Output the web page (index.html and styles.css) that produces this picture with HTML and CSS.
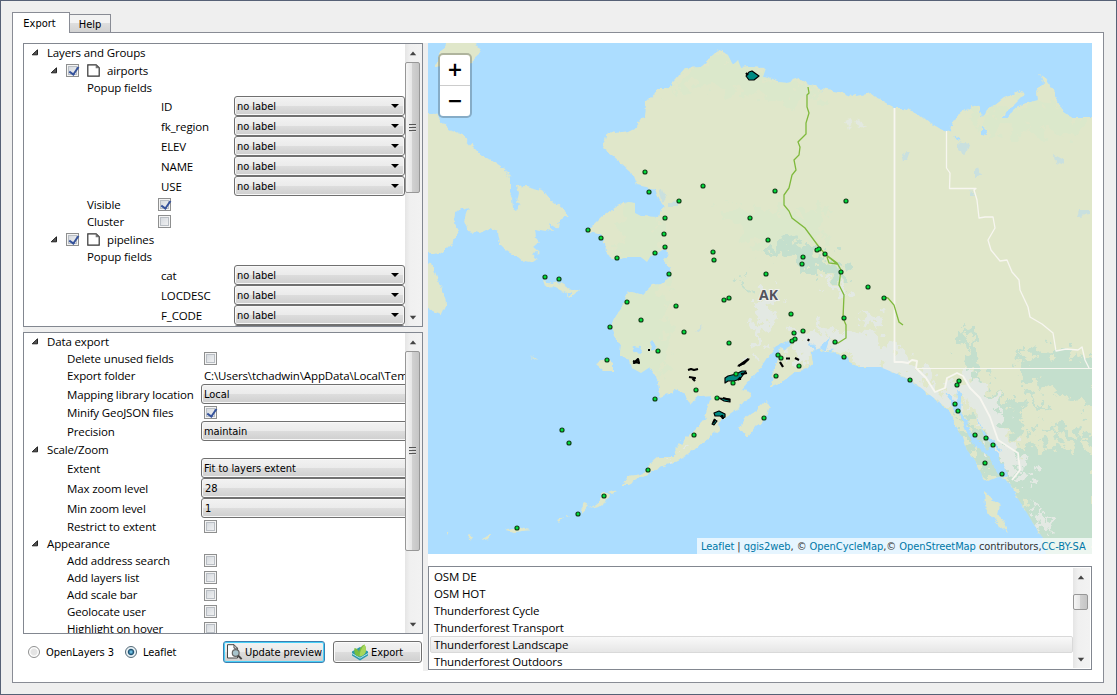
FILE: index.html
```html
<!DOCTYPE html>
<html lang="en">
<head>
<meta charset="utf-8">
<title>qgis2web</title>
<link rel="stylesheet" href="styles.css">
</head>
<body>
<div class="window">
  <svg class="defs" width="0" height="0">
    <symbol id="open" viewBox="0 0 8 7"><path d="M6.500 .8V5.800H1.200z" fill="#555" stroke="#222" stroke-width="1" stroke-linejoin="round"/></symbol>
    <symbol id="page" viewBox="0 0 13 13"><path d="M.8.8h8.4l3 3v8.4H.8z" fill="#fff" stroke="#333" stroke-width="1.2"/><path d="M8.7.8v3.5h3.5z" fill="#777"/></symbol>
    <symbol id="up" viewBox="0 0 8 5"><path d="M4 .6 7.200 4.300H.8z" fill="#444"/></symbol>
    <symbol id="down" viewBox="0 0 8 5"><path d="M.8.7h6.400L4 4.400z" fill="#444"/></symbol>
  </svg>
  <nav class="tabs"><span class="tab active">Export</span><span class="tab">Help</span></nav>
  <main class="panel">
    <section class="left">
      <div class="tree tree-layers">
        <div class="rows">
          <div class="row"><svg class="arrow"><use href="#open"/></svg><span>Layers and Groups</span></div>
          <div class="row layer"><svg class="arrow"><use href="#open"/></svg><i class="check on"></i><svg class="page"><use href="#page"/></svg><span>airports</span></div>
          <div class="row popup">Popup fields</div>
          <div class="row field"><span class="name">ID</span><span class="combo">no label</span></div>
          <div class="row field"><span class="name">fk_region</span><span class="combo">no label</span></div>
          <div class="row field"><span class="name">ELEV</span><span class="combo">no label</span></div>
          <div class="row field"><span class="name">NAME</span><span class="combo">no label</span></div>
          <div class="row field"><span class="name">USE</span><span class="combo">no label</span></div>
          <div class="row flag"><span class="name">Visible</span><i class="check on"></i></div>
          <div class="row flag"><span class="name">Cluster</span><i class="check"></i></div>
          <div class="row layer"><svg class="arrow"><use href="#open"/></svg><i class="check on"></i><svg class="page"><use href="#page"/></svg><span>pipelines</span></div>
          <div class="row popup">Popup fields</div>
          <div class="row field"><span class="name">cat</span><span class="combo">no label</span></div>
          <div class="row field"><span class="name">LOCDESC</span><span class="combo">no label</span></div>
          <div class="row field"><span class="name">F_CODE</span><span class="combo">no label</span></div>
          <div class="row field"><span class="name"></span><span class="combo"></span></div>
        </div>
        <div class="scroll"><svg class="sa"><use href="#up"/></svg><div class="thumb t1"><i class="grip"></i></div><svg class="sa end"><use href="#down"/></svg></div>
      </div>
      <div class="splitter-h"></div>
      <div class="tree tree-options">
        <div class="rows">
          <div class="row"><svg class="arrow"><use href="#open"/></svg><span>Data export</span></div>
          <div class="row opt"><span class="name">Delete unused fields</span><i class="check"></i></div>
          <div class="row opt"><span class="name">Export folder</span><span class="path">C:\Users\tchadwin\AppData\Local\Temp</span></div>
          <div class="row opt tall"><span class="name">Mapping library location</span><span class="combo wide">Local</span></div>
          <div class="row opt"><span class="name">Minify GeoJSON files</span><i class="check on"></i></div>
          <div class="row opt tall"><span class="name">Precision</span><span class="combo wide">maintain</span></div>
          <div class="row"><svg class="arrow"><use href="#open"/></svg><span>Scale/Zoom</span></div>
          <div class="row opt tall"><span class="name">Extent</span><span class="combo wide">Fit to layers extent</span></div>
          <div class="row opt tall"><span class="name">Max zoom level</span><span class="combo wide num">28</span></div>
          <div class="row opt tall"><span class="name">Min zoom level</span><span class="combo wide num">1</span></div>
          <div class="row opt"><span class="name">Restrict to extent</span><i class="check"></i></div>
          <div class="row"><svg class="arrow"><use href="#open"/></svg><span>Appearance</span></div>
          <div class="row opt"><span class="name">Add address search</span><i class="check"></i></div>
          <div class="row opt"><span class="name">Add layers list</span><i class="check"></i></div>
          <div class="row opt"><span class="name">Add scale bar</span><i class="check"></i></div>
          <div class="row opt"><span class="name">Geolocate user</span><i class="check"></i></div>
          <div class="row opt"><span class="name">Highlight on hover</span><i class="check"></i></div>
        </div>
        <div class="scroll"><svg class="sa"><use href="#up"/></svg><div class="thumb t2"><i class="grip"></i></div><svg class="sa end"><use href="#down"/></svg></div>
      </div>
      <div class="actions">
        <i class="radio"></i><span class="rl r1">OpenLayers 3</span>
        <i class="radio sel"></i><span class="rl r2">Leaflet</span>
        <button class="btn primary"><svg width="17" height="16" viewBox="0 0 17 16"><path d="M1.5.7H8l3.5 3.5V14h-10z" fill="#fff" stroke="#444"/><path d="M8 .7v3.5h3.5" fill="none" stroke="#444"/><circle cx="9.7" cy="9" r="3.4" fill="#a8c4cc" stroke="#666" stroke-width="1.2"/><path d="m12 11.5 3.7 3.6" stroke="#444" stroke-width="2"/></svg><span>Update preview</span></button>
        <button class="btn export"><svg width="16" height="17" viewBox="0 0 16 17"><path d="M0 7.500 8 3l8 4.500v4L8 16.500 0 11.500z" fill="#2a98ab"/><path d="m0 9.500 8 4.700 8-4.700" fill="none" stroke="#d5f4fa" stroke-width=".8"/><path d="M7.500 12.500C3.500 12.500 1.500 9 2.500 4 5 4.500 6.500 6 7 8 7.500 4 9.500 1.500 12.500 .5 15.500 6 14 11.500 7.500 12.500z" fill="#79bd40"/><path d="M7.500 12.500C7.500 8.500 9.500 4 12.500 .5 15.500 6 14 11.500 7.500 12.500z" fill="#a8d65c"/></svg><span>Export</span></button>
      </div>
    </section>
    <div class="splitter-v"></div>
    <section class="right">
      <div class="map">
        <svg width="664" height="511" viewBox="428 43 664 511">
          <defs>
            <filter id="coast" x="-5%" y="-5%" width="110%" height="110%"><feTurbulence type="fractalNoise" baseFrequency=".12" numOctaves="3" seed="4"/><feDisplacementMap in="SourceGraphic" scale="7" xChannelSelector="R" yChannelSelector="G"/></filter>
            <filter id="rough" x="-20%" y="-20%" width="140%" height="140%"><feTurbulence type="fractalNoise" baseFrequency=".09" numOctaves="5" seed="9"/><feDisplacementMap in="SourceGraphic" scale="42" xChannelSelector="R" yChannelSelector="G"/></filter>
            <path id="mainland" d="M608 132L603 148 611 154 620 162 631 172 636 185 645 187 655 189 658 197 661 203 665 206 660 210 658 217 641 216 635 213 635 203 628 202 618 206 603 215 595 223 587 231 600 235 605 243 606 253 616 260 628 257 641 257 647 262 650 257 658 253 665 248 669 252 667 258 663 259 669 267 670 277 661 284 653 285 643 295 631 292 626 295 625 303 618 313 612 323 615 337 621 345 620 355 630 360 632 368 641 373 650 367 655 373 658 383 660 396 675 390 685 394 691 404 695 398 711 396 708 405 705 418 698 427 688 437 675 450 674 457 658 457 651 463 641 475 628 477 623 485 628 485 640 478 650 473 661 467 673 463 683 458 695 448 711 437 720 430 718 423 731 413 743 405 753 393 741 390 750 380 761 368 768 357 776 347 788 340 793 343 780 350 773 373 769 388 777 385 787 378 798 370 807 368 812 362 810 352 820 348 827 353 837 352 847 357 850 362 858 367 880 367 897 374 910 379 920 387 930 395 943 405 952 413 955 427 963 438 967 450 975 460 983 477 988 481 997 477 1010 483 1017 497 1027 513 1033 523 1043 538 1047 560H1100V118H1072L1063 112 1057 100 1052 88 1045 78 1040 75 1043 83 1037 93 1038 100 1027 103 1015 108 1008 118 1000 118 1013 105 1025 93 1019 91 1003 98 987 110 983 117 978 107 973 105 963 112 952 120 950 130 945 132 930 123 917 112 903 108 894 108 880 100 870 93 853 97 840 92 820 89 807 83 800 79 787 83 776 82 768 78 763 77 766 68 748 67 741 68 738 60 733 65 728 55 716 50 711 58 701 67 685 68 675 80 668 87 658 87 651 97 645 103 644 117 636 127 628 131 615 133z"/>
            <clipPath id="land"><use href="#mainland"/></clipPath>
          </defs>
          <rect x="428" y="43" width="664" height="511" fill="#acddff"/>
          <g fill="#e0e7ca" filter="url(#coast)">
            <use href="#mainland"/>
            <path d="M420 113H430L436 114 446 127 461 134 478 152 493 161 505 169 510 178 510 192 513 197 514 208 517 210 521 204 516 202 518 193 516 187 525 186 545 191 553 202 561 208 569 215 560 220 557 228 548 222 553 231 535 228 536 237 540 242 534 247 540 252 531 253 537 260 531 264 525 263 518 257 508 252 500 244 498 232 490 228 480 233 468 231 464 220 468 208 455 213 454 222 459 231 453 243 445 251 435 254H420zM420 263L432 264 437 277 443 293 446 303 441 314 420 305z"/>
            <path d="M436 68L438 56 450 40H474L480 54 472 61 460 64zM543 281L545 287 553 286 565 293 571 298 579 291 568 287 560 282 552 284zM595 364L607 359 614 364 614 371 603 371zM560 290L566 293 572 292 569 298zM740 427L745 418 756 410 766 400 769 405 766 416 757 426 748 437zM603 493L609 495 605 504 590 508 599 502zM580 511L585 503 590 505 582 514zM505 530L517 527 530 530 516 532zM490 535L478 540 490 538zM473 536l-5-1 3 4zM557 520l6-3-4 5zM608 492l5-2 4 2-4 2zM570 514l-6 3 4-1zM445 533l4-2-3 5zM984 492L993 500 1000 505 998 514 1004 524 1008 533 998 525 990 515 985 504zM530 356l6 4 2 1-4-1z"/>
          </g>
          <g clip-path="url(#land)">
            <g fill="#dbe8cb" filter="url(#rough)"><path d="M665 90L700 60 730 50 770 72 830 95 780 105 740 93 700 85zM970 110L1080 100V135L980 130zM630 190L660 220 670 370 640 390 600 340zM720 210H830L820 240 760 250z"/></g>
            <g fill="#c4dfcd" filter="url(#rough)"><path d="M770 246L790 240 817 252 826 263 840 262 851 278 846 286 825 269 800 269 785 255 768 260zM1015 358L1055 350 1100 360V410L1070 400 1050 385 1025 378zM1035 440L1060 450 1080 440 1100 450V570H1045L1025 520 1010 490 1000 470zM963 320L972 330 975 350 985 375 975 385 966 360zM990 385L1010 410 1030 430 1020 440 1000 420zM960 412L976 430 1005 450 1006 475 985 475 970 447zM1040 425L1092 431 1080 445zM740 275l9 13-5 6zM1000 400l15 0 10 15-13-3zM1020 390l12 3 20 18-14-5z"/></g>
            <g fill="#e3e9e3" filter="url(#rough)"><path d="M760 294L780 293 769 318 763 343 753 360 750 355 757 329zM790 335L812 329 838 332 860 330 887 340 905 350 915 365 930 378 945 395 965 370 990 392 1008 431 1022 460 1012 478 993 448 979 423 965 398 945 413 915 389 882 374 857 365 838 349 812 358 796 367zM856 316l16-4 9 9-9 7zM820 279l16 2 10 11-7 5zM1030 500l14 15 10 23-17-18zM675 450l10-4 7 4-13 3zM1023 460l9 9-5 17-12 1z"/></g>
            <g fill="#e3e9e0" filter="url(#coast)"><path d="M846 121l5-2 3 4-5 4zM856 119l3-1 4 5 4 5-5-2-4 2zM848 127l4 1-3 3z"/></g>
            <g fill="#c9e0df" filter="url(#coast)"><path d="M659 190l4-1 3 10-5 3zM669 201l13 1-4 4-9 0zM958 142l11 2-2 6-2 5-7-5zM901 152l4 1 5-2-3 8-4 3zM975 170l4-2 2 6-6 4zM1055 155l9 5 1 6-9-3zM1079 211l10 0 1 4-13 1zM694 331l9-7-4 8zM972 190l3 7-4 0z"/></g>
            <g fill="#acddff" filter="url(#coast)"><path d="M635 346l7 1-2 6-8-1zM652 341l5 5-5 5-3-5zM812 343l8 12-6-3-5-11zM820 347l10-9-5 16zM834 347l-10 20-4 5 5-15zM957 389l5 7-2 13 10 22 20 21-2 3-17-13-10-25-8-8 5-11zM946 393l7 4 2 14-5-11zM976 414l8 17 17 18-2 3-15-16zM991 445l18 32-4 3-9-8-9-20zM982 126l4 2-1 8-3-1zM953 136l8 5-5-1z"/></g>
          </g>
          <g fill="none" stroke="#f7f6f0" stroke-linejoin="round">
            <path stroke-width="1.800" d="M894.500 108V362L902 362 908 363 912 360 917 361 916 368 926 378 935 392 945 388 947 378 957 373 963 376 970 388 980 398 990 417 998 440 1018 453 1020 470 1012 480"/>
            <path stroke-width="1.300" d="M946.500 131V168L950 173 949.500 188.500H976L974 190 977 200 979 218 985 217 993 217 995 228 988 240 991 250 1000 261 1007 260 1012 272 1019 280 1020 290 1028 307 1030 317 1042 324 1053 333 1056 351 1066 349 1078 350 1082 347 1085 360 1089 368"/>
            <path d="M917 368.500H1092"/>
          </g>
          <g fill="none" stroke="#7fb93c" stroke-width="1.300"><path d="M808 87L809 93 807 95 807 107 809 113 806 123 806 134 798 142 800 147 799 155 794 160 796 170 792 175 789 188 784 195 784 205 789 211 792 218 805 228 819 247 825 254 837 263 841 270 839 285 844 295 843 318 846 325 846 338 838 343 834 342M827 257L829 263 837 264 831 259 826 255M884 297L888 298 894 305 899 322 903 325"/></g>
          <g fill="#008b83" stroke="#000" stroke-width="1.200" stroke-linejoin="round">
            <path d="M746 76l3-4 3-1 7 5-5 4-5 0zM725 378l3-2 8-2 6-3 4 0-6 8-6 2-6 0-3 2zM714 413l5-2 6 3 0 3-2 1-3-2-5 0zM712 424l3-4 2 1-3 4zM719 398l11 1 0 3-6-1zM738 366l6-4 5-3-5 5z"/>
            <path fill="none" stroke-width="2.200" d="M746 73l2 2M741 374l6-1M738 380l2-2v2M738.500 366l3-2 7-5M688 370l3-1 3 1 4-1M689 377l6 1-2 1 2 2M633 361l6 2-1-4-4 4 3-1M648 350h2M723 398l7 2M722 415l1 4M713 423l2-4M780 362l3 5M786 358.500h4M795 358l4 2M808 341l1-2M793 341l3-2"/>
          </g>
          <text x="759" y="299.500" class="ak">AK</text>
          <defs><path id="sites" stroke-linecap="round" d="M645 172h.01M649 192h.01M703 186h.01M679 201h.01M775 191h.01M846 201h.01M665 218h.01M664 234h.01M665 247h.01M655 253h.01M588 230h.01M601 238h.01M617 258h.01M545 277h.01M559 279h.01M750 218h.01M768 240h.01M713 252h.01M714 260h.01M669 274h.01M766 274h.01M724 300h.01M729 298h.01M817 250h.01M819 249h.01M825 254h.01M803 257h.01M802 264h.01M841 272h.01M868 287h.01M884 298h.01M627 302h.01M641 320h.01M610 327h.01M676 306h.01M684 332h.01M729 343h.01M658 351h.01M607 360h.01M655 399h.01M696 390h.01M736 374h.01M733 383h.01M717 398h.01M764 418h.01M694 435h.01M562 430h.01M569 443h.01M648 470h.01M604 496h.01M578 514h.01M517 528h.01M791 314h.01M803 331h.01M794 333h.01M792 341h.01M795 339h.01M844 318h.01M835 342h.01M844 357h.01M778 355h.01M781 358h.01M799 366h.01M776 376h.01M910 380h.01M959 381h.01M957 385h.01M955 404h.01M958 411h.01M975 435h.01M986 438h.01M993 445h.01M985 463h.01M1002 474h.01"/></defs>
          <use href="#sites" stroke="#123d18" stroke-width="5.200"/><use href="#sites" stroke="#00dd3b" stroke-width="2.900"/>
        </svg>
        <div class="zoom"><span>+</span><span>−</span></div>
        <div class="attribution"><a>Leaflet</a> | <a>qgis2web</a>, © <a>OpenCycleMap</a>,© <a>OpenStreetMap</a> contributors,<a>CC-BY-SA</a></div>
      </div>
      <div class="basemaps">
        <ul><li>OSM DE</li><li>OSM HOT</li><li>Thunderforest Cycle</li><li>Thunderforest Transport</li><li class="current">Thunderforest Landscape</li><li>Thunderforest Outdoors</li></ul>
        <div class="scroll"><svg class="sa"><use href="#up"/></svg><div class="thumb t3"></div><svg class="sa end"><use href="#down"/></svg></div>
      </div>
    </section>
  </main>
</div>
</body>
</html>
```
FILE: styles.css
```css
* { box-sizing: border-box; }
body { margin: 0; font: 11.5px/17px "Open Sans", "Noto Sans", sans-serif; color: #000; }
.window { width: 1117px; height: 695px; border: 1px solid #566176; background: #efefef; padding: 11px 13px 0 11px; overflow: hidden; }
.defs { position: absolute; }
.tabs { height: 20px; display: flex; align-items: flex-end; font: 11px/18px "DejaVu Sans Condensed", sans-serif; }
.tab { height: 18px; width: 41px; border: 1px solid #898c95; border-left: 0; border-bottom: 0; background: linear-gradient(#f3f3f3 50%, #dedede 50%, #d2d2d2); text-align: center; line-height: 19px; }
.tab.active { position: relative; z-index: 1; width: 58px; height: 21px; margin-bottom: -1px; border-left: 1px solid #898c95; background: #fff; line-height: 21px; padding-right: 3px; }
.panel { height: 651px; width: 1092px; border: 1px solid #898c95; background: #fff; padding: 10px; display: flex; }
.left { width: 400px; flex: none; }
.tree { border: 1px solid #828790; display: flex; background: #fff; overflow: hidden; }
.tree-layers { height: 284px; }
.tree-options { height: 302px; }
.rows { width: 381px; overflow: hidden; flex: none; }
.splitter-h { height: 5px; background: #efefef; }
.splitter-v { width: 5px; height: 628px; background: #efefef; flex: none; }
.row { height: 17px; display: flex; align-items: center; white-space: nowrap; padding-left: 8px; letter-spacing: -.14px; }
.arrow { width: 8px; height: 7px; margin: 0 8px 0 -1px; flex: none; }
.layer { height: 19px; padding-left: 27px; }
.layer .check { margin-left: 0; }
.page { width: 13px; height: 13px; margin: 0 7px 0 8px; }
.popup { height: 16px; padding-left: 63px; line-height: 16px; }
.field { height: 20px; padding-left: 137px; }
.field .name { width: 73px; padding-top: 1px; }
.combo { width: 171px; height: 20px; flex: none; border: 1px solid #707070; border-radius: 3px; box-shadow: inset 0 0 0 1px #f8f8f8; background: linear-gradient(#f2f2f2, #ebebeb 50%, #dddddd 50%, #cfcfcf); padding-left: 2px; font: 11px/19px "DejaVu Sans Condensed", sans-serif; letter-spacing: -.05px; display: flex; justify-content: space-between; }
.combo::after { content: ""; border: 4px solid transparent; border-top: 4.500px solid #000; border-bottom: 0; margin: 7px 5px 0 0; height: 0; }
.flag { padding-left: 63px; }
.flag .name { width: 71px; }
.opt { padding-left: 43px; }
.opt .name { width: 137px; flex: none; }
.opt .combo { margin-left: -3px; }
.combo.wide { width: 230px; }
.combo.num { padding-left: 3px; }
.tall { height: 20px; }
.check { width: 13px; height: 13px; flex: none; border: 1px solid #8e8f8f; box-shadow: inset 0 0 0 1px #f4f4f4, inset 0 0 0 2px #b9bec4; background: linear-gradient(135deg, #cfd4da, #f6f6f6); }
.check.on::after { content: ""; display: block; width: 4px; height: 8px; margin: 0 0 0 4px; border: solid #35529b; border-width: 0 2px 2px 0; transform: rotate(35deg); }
.scroll { width: 17px; flex: none; display: flex; flex-direction: column; align-items: center; background: linear-gradient(90deg, #e5e5e5, #f0f0f0 30%, #f2f2f2); padding: 7px 2px 6px 0; }
.sa { width: 8px; height: 5px; flex: none; }
.end { margin-top: auto; }
.thumb { width: 15px; border: 1px solid #979797; border-radius: 2px; background: linear-gradient(90deg, #f5f5f5, #e6e6e6 45%, #d0d0d0 50%, #c5c5c5); margin-top: 6px; display: flex; align-items: center; justify-content: center; flex: none; }
.t1 { height: 131px; }
.t2 { height: 200px; }
.t3 { height: 16px; margin-top: 14px; }
.grip { width: 7px; height: 8px; background: repeating-linear-gradient(#555 0 1px, #ddd 1px 2px, transparent 2px 3px); }
.actions { display: flex; align-items: center; height: 37px; padding: 0 0 1px 5px; font: 11px/17px "DejaVu Sans Condensed", sans-serif; }
.radio { width: 12px; height: 12px; border-radius: 50%; border: 1px solid #8e8f8f; background: radial-gradient(#e4e4e4 40%, #fff 60%); flex: none; }
.radio.sel { background: radial-gradient(circle, #72c4e8 0 8%, #174b6c 38%, #e8f1f5 52%); border-color: #536977; }
.rl { padding-left: 6px; white-space: nowrap; letter-spacing: -.05px; }
.r1 { width: 85px; }
.r2 { width: 58px; }
.btn { height: 22px; display: flex; align-items: center; justify-content: center; gap: 3px; padding: 0; border: 1px solid #707070; border-radius: 3px; box-shadow: inset 0 0 0 1px #fbfbfb; background: linear-gradient(#f2f2f2, #ebebeb 50%, #dddddd 50%, #cfcfcf); font: inherit; letter-spacing: -.08px; white-space: nowrap; color: #000; }
.primary { width: 102px; margin-left: 28px; border-color: #3c7fb1; box-shadow: inset 0 0 0 1px #48d0f8; gap: 2px; }
.export { width: 89px; margin-left: 8px; }
.right { width: 664px; }
.map { position: relative; height: 511px; }
.map svg { display: block; }
.ak { font: bold 14px "Open Sans", sans-serif; fill: #53545c; stroke: #eff0ec; stroke-width: 2px; paint-order: stroke; }
.zoom { position: absolute; left: 10px; top: 10px; width: 34px; height: 65px; border: 2px solid rgba(0, 0, 0, .22); border-radius: 5px; background: #fff; background-clip: padding-box; font: bold 19px/29px "DejaVu Sans", sans-serif; text-align: center; }
.zoom span { display: block; height: 31px; }
.zoom span:first-child { border-bottom: 1px solid #ccc; }
.attribution { position: absolute; right: 0; bottom: 0; width: 395px; height: 16px; padding-left: 4px; background: rgba(255, 255, 255, .7); color: #333; font: 11px/17px "DejaVu Sans Condensed", sans-serif; letter-spacing: -.06px; white-space: nowrap; }
.attribution a { color: #0078a8; }
.basemaps { margin-top: 12px; height: 104px; border: 1px solid #828790; display: flex; padding: 1px; }
.basemaps ul { list-style: none; margin: 0; padding: 0; width: 643px; overflow: hidden; }
.basemaps li { height: 17px; padding-left: 4px; letter-spacing: -.14px; }
.basemaps .current { border: 1px solid #d9d9d9; border-radius: 2px; background: linear-gradient(#f9f9f9, #e6e6e6); padding-left: 3px; line-height: 15px; }
```
